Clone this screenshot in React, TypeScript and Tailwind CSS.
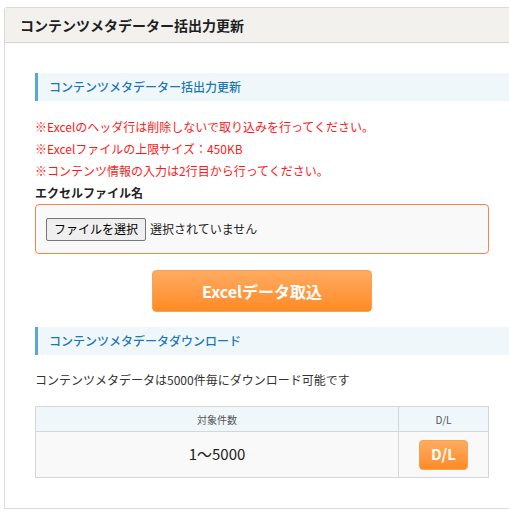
import React from 'react';

const font = { fontFamily: '"Noto Sans CJK JP", "Noto Sans", sans-serif' };

function SectionTitle({ children }: { children: React.ReactNode }) {
  return (
    <div className="flex h-[28px] w-[490px] items-center border-l-[3px] border-[#5aa7d3] bg-[#f0f7fa] pl-[11px] text-[12px] font-medium text-[#1b77b6]">
      {children}
    </div>
  );
}

export default function App() {
  return (
    <div className="h-[522px] w-[509px] overflow-hidden bg-white pl-[4px] pt-[7px]" style={font}>
      <div className="w-[520px] rounded-tl-[3px] border border-[#dadada]">
        {/* Page header */}
        <div className="flex h-[35px] items-center border-b border-[#d6d6d6] bg-[#f2f1ee] pl-[15px] text-[14px] font-bold text-[#1e1e1e]">
          コンテンツメタデーター括出力更新
        </div>

        <div className="pb-[30px] pl-[30px] pt-[30px]">
          <SectionTitle>コンテンツメタデーター括出力更新</SectionTitle>

          <div className="mt-[15px] w-[454px] text-[12px] leading-[22px] text-[#ff1a1a]">
            <p>※Excelのヘッダ行は削除しないで取り込みを行ってください。</p>
            <p>※Excelファイルの上限サイズ：450KB</p>
            <p>※コンテンツ情報の入力は2行目から行ってください。</p>
          </div>

          <div className="w-[454px] text-[12px] font-bold leading-[22px] text-[#222]">エクセルファイル名</div>

          <div className="flex h-[50px] w-[454px] items-center gap-[4px] rounded-[4px] border border-[#f4874a] bg-[#f9f9f9] pl-[10px]">
            <button className="h-[23px] rounded-[2px] border border-[#767676] bg-[#efefef] px-[7px] text-[12px] leading-[20px] text-black">
              ファイルを選択
            </button>
            <span className="text-[12px] text-[#222]">選択されていません</span>
          </div>

          <div className="flex w-[454px] justify-center pt-[16px]">
            <button className="h-[42px] w-[220px] rounded-[4px] border border-[#f7a259] bg-gradient-to-b from-[#ffab5f] to-[#ff8a1f] text-[16px] font-bold text-white">
              Excelデータ取込
            </button>
          </div>

          <div className="mt-[15px]">
            <SectionTitle>コンテンツメタデータダウンロード</SectionTitle>
          </div>

          <p className="mt-[14px] text-[12px] leading-[22px] text-[#333]">
            コンテンツメタデータは5000件毎にダウンロード可能です
          </p>

          <table className="mt-[15px] w-[454px] border-collapse border border-[#d6d6d6]">
            <thead>
              <tr className="h-[25px] bg-[#f0f7fa] text-[10px] text-[#555]">
                <th className="w-[363px] border border-[#d6d6d6] font-normal">対象件数</th>
                <th className="border border-[#d6d6d6] font-normal">D/L</th>
              </tr>
            </thead>
            <tbody>
              <tr className="h-[46px] bg-[#f9f9f9]">
                <td className="border border-[#d6d6d6] text-center text-[15px] text-[#222]">1～5000</td>
                <td className="border border-[#d6d6d6] text-center">
                  <button className="h-[30px] w-[49px] rounded-[4px] border border-[#f7a259] bg-gradient-to-b from-[#ffab5f] to-[#ff8a1f] text-[15px] font-bold text-white">
                    D/L
                  </button>
                </td>
              </tr>
            </tbody>
          </table>
        </div>
      </div>
    </div>
  );
}
